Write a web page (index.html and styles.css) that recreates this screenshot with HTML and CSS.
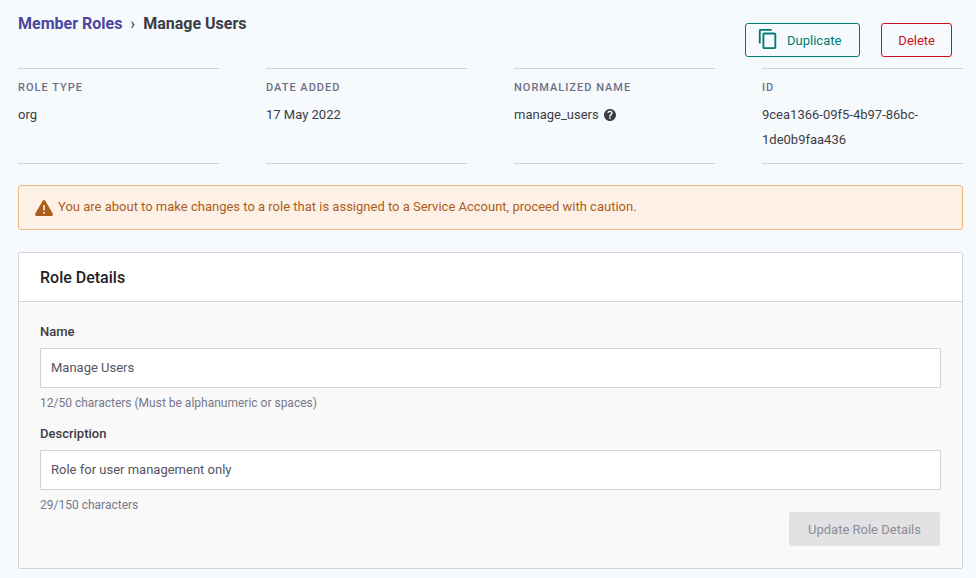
FILE: index.html
```html
<!DOCTYPE html>
<html lang="en">
<head>
<meta charset="utf-8">
<meta name="viewport" content="width=device-width, initial-scale=1">
<title>Manage Users</title>
<link rel="stylesheet" href="styles.css">
</head>
<body>
<header class="page-header">
  <nav class="breadcrumb">
    <a class="breadcrumb-link" href="#">Member Roles</a>
    <span class="breadcrumb-separator">›</span>
    <h1 class="breadcrumb-current">Manage Users</h1>
  </nav>
  <div class="actions">
    <button class="button button-duplicate" type="button">
      <svg class="copy-icon" viewBox="0 0 24 24"><path fill="currentColor" d="M16 1H4c-1.100 0-2 .9-2 2v14h2V3h12V1zm3 4H8c-1.100 0-2 .9-2 2v14c0 1.100.9 2 2 2h11c1.100 0 2-.9 2-2V7c0-1.100-.9-2-2-2zm0 16H8V7h11v14z"/></svg>
      Duplicate
    </button>
    <button class="button button-delete" type="button">Delete</button>
  </div>
</header>
<main>
  <dl class="summary">
    <div class="summary-item"><dt>Role type</dt><dd>org</dd></div>
    <div class="summary-item"><dt>Date added</dt><dd>17 May 2022</dd></div>
    <div class="summary-item"><dt>Normalized name</dt><dd class="with-help">manage_users
      <svg class="help-icon" viewBox="0 0 24 24"><path fill="currentColor" d="M12 0C5.400 0 0 5.400 0 12s5.400 12 12 12 12-5.400 12-12S18.600 0 12 0zm1.300 20h-3v-3h3zm2.800-9.100-1.200 1.200c-1 1-1.500 1.700-1.500 3.400h-3v-.8c0-1.400.6-2.600 1.500-3.500l1.600-1.600c.5-.5.700-1 .7-1.600 0-1.300-1-2.200-2.300-2.200S9.600 6.700 9.600 8h-3c0-2.900 2.400-5.100 5.300-5.100s5.300 2.200 5.300 5.100c0 1.200-.4 2.200-1.100 2.900z"/></svg></dd></div>
    <div class="summary-item"><dt>ID</dt><dd>9cea1366-09f5-4b97-86bc-1de0b9faa436</dd></div>
  </dl>
  <div class="alert" role="alert">
    <svg class="alert-icon" viewBox="0 0 18 16"><path fill="currentColor" d="M7.700.8c.6-1 2-1 2.600 0l7.500 13c.6 1-.1 2.200-1.300 2.200h-15C.300 16-.4 14.800.2 13.800z"/><path fill="#fdf1e7" d="M8.200 5h1.600v5.500H8.200zM8.200 12h1.600v1.700H8.200z"/></svg>
    <p>You are about to make changes to a role that is assigned to a Service Account, proceed with caution.</p>
  </div>
  <section class="card">
    <h2 class="card-title">Role Details</h2>
    <form class="card-body">
      <div class="field">
        <label for="name">Name</label>
        <input id="name" type="text" value="Manage Users">
        <p class="hint">12/50 characters (Must be alphanumeric or spaces)</p>
      </div>
      <div class="field">
        <label for="description">Description</label>
        <input id="description" type="text" value="Role for user management only">
        <p class="hint">29/150 characters</p>
      </div>
      <button class="button button-update" type="submit" disabled>Update Role Details</button>
    </form>
  </section>
</main>
</body>
</html>
```
FILE: styles.css
```css
* {
  box-sizing: border-box;
}

body {
  margin: 0;
  padding: 11px 13px 9px 18px;
  background: #f6fafd;
  color: #3c3c44;
  font: 13px/25px Roboto, sans-serif;
}

h1, h2, p, dl, dd {
  margin: 0;
}

.page-header {
  display: flex;
  justify-content: space-between;
  align-items: flex-start;
}

.breadcrumb {
  display: flex;
  gap: 8px;
  font-size: 16px;
  line-height: 25px;
}

.breadcrumb-link {
  color: #4b45a1;
  font-weight: 700;
  text-decoration: none;
}

.breadcrumb-current {
  font-size: 16px;
  font-weight: 700;
}

.actions {
  display: flex;
  gap: 21px;
  padding: 12px 11px 11px 0;
}

.button {
  display: flex;
  align-items: center;
  height: 34px;
  padding: 0 16px;
  border: 1px solid;
  border-radius: 3px;
  background: transparent;
  font: 13px Roboto, sans-serif;
}

.button-duplicate {
  gap: 8px;
  padding: 0 18px 0 11px;
  color: #007a73;
}

.button-delete {
  color: #c8101e;
}

.copy-icon {
  width: 22px;
  height: 22px;
  margin-bottom: 2px;
}

.summary {
  display: grid;
  grid-template-columns: repeat(4, minmax(0, 1fr));
  gap: 47px;
}

.summary-item {
  padding: 6px 0 11px;
  border: solid #d0d0d8;
  border-width: 1px 0;
}

.summary-item dt {
  margin-bottom: 2px;
  color: #6f6f83;
  font-size: 11px;
  font-weight: 500;
  letter-spacing: 1px;
  text-transform: uppercase;
}

.with-help {
  display: flex;
  align-items: center;
  gap: 5px;
}

.help-icon {
  width: 12px;
  height: 12px;
}

.alert {
  display: flex;
  align-items: flex-end;
  gap: 5px;
  margin-top: 21px;
  padding: 8px 16px 10px;
  border: 1px solid #edb77d;
  border-radius: 3px;
  background: #fdf1e7;
  color: #ad5d19;
}

.alert-icon {
  width: 18px;
  height: 16px;
  margin-bottom: 3px;
}

.card {
  margin-top: 22px;
  border: 1px solid #d3d3dc;
  border-radius: 2px;
  background: #f9f9f9;
}

.card-title {
  padding: 12px 21px 11px;
  border-bottom: 1px solid #d3d3dc;
  background: #fff;
  color: #1f1f25;
  font-size: 16px;
  font-weight: 500;
}

.card-body {
  padding: 17px 21px 22px;
}

.field label {
  display: block;
  margin-bottom: 4px;
  font-weight: 500;
}

.field input {
  display: block;
  width: 100%;
  height: 40px;
  padding: 0 10px 2px;
  border: 1px solid #d3d3dc;
  border-radius: 1px;
  background: #fff;
  color: #555562;
  font: 13px Roboto, sans-serif;
}

.hint {
  padding-top: 3px;
  color: #77778a;
  font-size: 12px;
}

.field + .field {
  margin-top: 5px;
}

.button-update {
  margin: -6px 1px 0 auto;
  padding: 0 19px;
  border: 0;
  background: #e2e2e5;
  color: #8c8c93;
}
```
